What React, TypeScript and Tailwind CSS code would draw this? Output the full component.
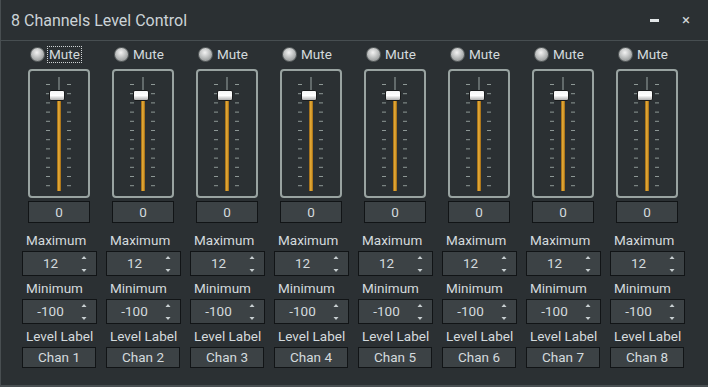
const channels = [1, 2, 3, 4, 5, 6, 7, 8];

const ticks = Array.from({ length: 12 }, (_, i) => 13 + i * 9.2);

function Slider() {
  return (
    <div className="ml-[11px] mt-[6px] h-[129px] w-[62px] rounded-[4px] border-2 border-[#99a3a1] bg-[#2b3033]">
      <svg width="58" height="125" viewBox="0 0 58 125" className="block">
        <defs>
          <linearGradient id="gold" x1="0" x2="1" y1="0" y2="0">
            <stop offset="0" stopColor="#8a5a10" />
            <stop offset="0.45" stopColor="#f0b43a" />
            <stop offset="1" stopColor="#9a6512" />
          </linearGradient>
          <linearGradient id="knob" x1="0" x2="0" y1="0" y2="1">
            <stop offset="0" stopColor="#f4f4f4" />
            <stop offset="0.5" stopColor="#ffffff" />
            <stop offset="1" stopColor="#a8a8a8" />
          </linearGradient>
        </defs>
        {ticks.map((y) => (
          <g key={y} fill="#8e9896">
            <rect x="16" y={y} width="4" height="1" />
            <rect x="37" y={y} width="4" height="1" />
          </g>
        ))}
        <rect x="28.5" y="6" width="1" height="14" fill="#9aa3a3" />
        <rect x="27" y="29" width="4" height="91" fill="url(#gold)" />
        <rect x="19.5" y="19.5" width="15" height="10" rx="1.5" fill="url(#knob)" stroke="#1a1c1d" />
      </svg>
    </div>
  );
}

function Spin({ value }: { value: string }) {
  return (
    <div className="relative ml-[5px] mt-[3px] flex h-[25px] w-[75px] items-center border border-[#111416] bg-[#3c4245] pr-[18px]">
      <span className="flex-1 text-center text-[13.5px] text-[#d4dadd]">{value}</span>
      <svg width="6" height="18" viewBox="0 0 6 18" className="absolute right-[9px] top-[3px]">
        <path d="M3 1 L5.5 4 L0.5 4 Z" fill="#c8d0d2" />
        <path d="M0.5 14 L5.5 14 L3 17 Z" fill="#c8d0d2" />
      </svg>
    </div>
  );
}

function Label({ text, mt }: { text: string; mt: string }) {
  return (
    <div className={`ml-[9px] h-[16px] text-[13.5px] leading-[16px] text-[#d4dadd] ${mt}`}>{text}</div>
  );
}

function Channel({ n }: { n: number }) {
  return (
    <div className="flex w-[84px] flex-col">
      <div className="ml-[13px] mt-[5px] flex h-[17px] items-center">
        <span className="h-[15px] w-[15px] rounded-full border border-[#5a5f60] bg-[radial-gradient(circle_at_45%_35%,#f2f2f2_0%,#c4c6c6_40%,#7e8282_100%)]" />
        <span
          className={`ml-[2px] flex h-[17px] items-center px-[1px] text-[13.5px] text-[#d4dadd] ${
            n === 1 ? "border border-dotted border-[#d0d4d6]" : "border border-transparent"
          }`}
        >
          Mute
        </span>
      </div>
      <Slider />
      <div className="ml-[11px] mt-[3px] flex h-[22px] w-[62px] items-center justify-center border border-[#111416] bg-[#3c4245] text-[13.5px] text-[#d4dadd]">
        0
      </div>
      <Label text="Maximum" mt="mt-[9px]" />
      <Spin value="12" />
      <Label text="Minimum" mt="mt-[4px]" />
      <Spin value="-100" />
      <Label text="Level Label" mt="mt-[4px]" />
      <div className="ml-[5px] mt-[3px] flex h-[21px] w-[74px] items-center justify-center border border-[#111416] bg-[#3c4245] text-[13.5px] text-[#d4dadd]">
        Chan {n}
      </div>
    </div>
  );
}

export default function App() {
  return (
    <div className="h-[387px] w-[708px] overflow-hidden border-b-2 border-l border-[#484e51] bg-[#2b3033] font-['Roboto',sans-serif]">
      <div className="flex h-[41px] items-center border-b border-[#474e51] pl-[10px] pt-[1px]">
        <span className="text-[16px] text-[#cbd3d7]">8 Channels Level Control</span>
        <div className="ml-auto flex items-center gap-[23px] pr-[18px]">
          <span className="h-[3px] w-[9px] bg-[#e2e6e8]" />
          <span className="text-[15px] leading-none text-[#d0d5d7]">×</span>
        </div>
      </div>
      <div className="flex pl-[16px]">
        {channels.map((n) => (
          <Channel key={n} n={n} />
        ))}
      </div>
    </div>
  );
}
